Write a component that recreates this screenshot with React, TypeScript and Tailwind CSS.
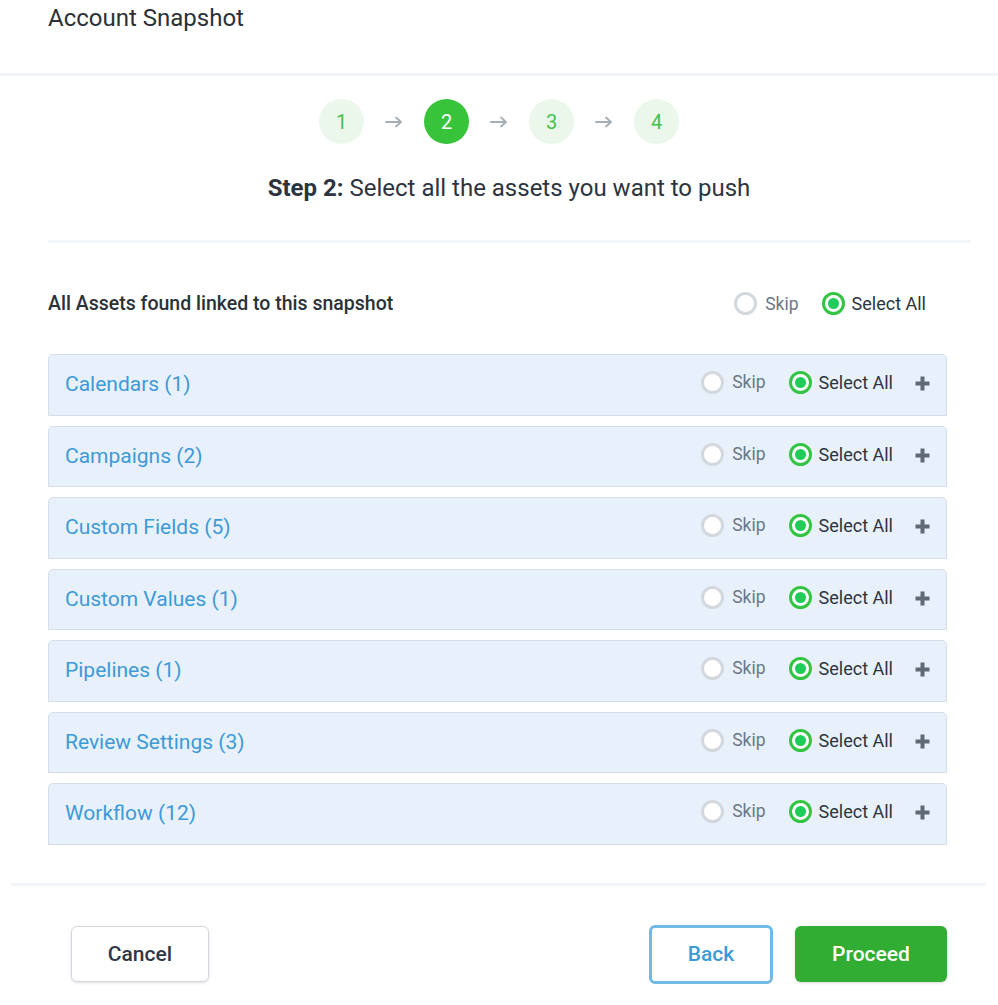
import React from "react";

const rows = [
  "Calendars (1)",
  "Campaigns (2)",
  "Custom Fields (5)",
  "Custom Values (1)",
  "Pipelines (1)",
  "Review Settings (3)",
  "Workflow (12)",
];

function Radio({ checked }: { checked?: boolean }) {
  return checked ? (
    <span className="flex h-[23px] w-[23px] items-center justify-center rounded-full border-[3px] border-[#34c443] bg-white">
      <span className="h-[11px] w-[11px] rounded-full bg-[#1fcc5a]" />
    </span>
  ) : (
    <span className="h-[23px] w-[23px] rounded-full border-[3px] border-[#d3d8de] bg-white" />
  );
}

function Choice() {
  return (
    <div className="flex items-center">
      <div className="flex items-center gap-[8px]">
        <Radio />
        <span className="text-[17.5px] text-[#6b7884]">Skip</span>
      </div>
      <div className="ml-[23px] flex items-center gap-[7px]">
        <Radio checked />
        <span className="text-[18px] text-[#2d3440]">Select All</span>
      </div>
    </div>
  );
}

function Arrow() {
  return (
    <svg width="18" height="12" viewBox="0 0 18 12" className="mx-[21px]">
      <path d="M1 6h15M11 1.5 16 6l-5 4.5" fill="none" stroke="#a5adb5" strokeWidth="1.8" strokeLinecap="round" strokeLinejoin="round" />
    </svg>
  );
}

function Step({ n, active }: { n: number; active?: boolean }) {
  return (
    <div
      className={
        active
          ? "flex h-[45px] w-[45px] items-center justify-center rounded-full bg-[#37c43b] text-[20px] text-white"
          : "flex h-[45px] w-[45px] items-center justify-center rounded-full bg-[#ebf7ea] text-[20px] text-[#46c04a]"
      }
    >
      {n}
    </div>
  );
}

export default function App() {
  return (
    <div className="min-h-[1005px] w-[998px] bg-white font-['Roboto',sans-serif] text-[#2d3440]">
      <div className="h-[73px] px-[48px] pt-[3px]">
        <h1 className="text-[24px] leading-[30px] text-[#2b3138]">Account Snapshot</h1>
      </div>
      <div className="h-[3px] w-full bg-[#f1f5f9]" />
      <div className="flex items-center justify-center pt-[23px]">
        <Step n={1} />
        <Arrow />
        <Step n={2} active />
        <Arrow />
        <Step n={3} />
        <Arrow />
        <Step n={4} />
      </div>
      <p className="mt-[30px] pl-[20px] text-center text-[24px] leading-[28px] text-[#2d3440]">
        <span className="font-bold">Step 2:</span> Select all the assets you want to push
      </p>
      <div className="mx-[48px] mr-[27px] mt-[38px] h-[3px] bg-[#f1f6fa]" />
      <div className="mt-[46px] flex items-center justify-between pl-[48px] pr-[72px]">
        <span className="text-[19.5px] font-medium text-[#2b3138]">All Assets found linked to this snapshot</span>
        <Choice />
      </div>
      <div className="mx-[48px] mr-[51px] mt-[36px] flex flex-col gap-[10px]">
        {rows.map((r) => (
          <div
            key={r}
            className="flex h-[61.5px] items-center justify-between rounded-t-[5px] border border-[#d5dde6] bg-[#e8f1fb] pl-[16px] pr-[15px]"
          >
            <span className="text-[21px] text-[#3d9ad9]">{r}</span>
            <div className="mb-[5px] flex items-center">
              <Choice />
              <svg width="17" height="17" viewBox="0 0 17 17" className="ml-[21px] mt-[2px]">
                <path d="M8.5 1.5v14M1.5 8.5h14" stroke="#5f6a74" strokeWidth="4" />
              </svg>
            </div>
          </div>
        ))}
      </div>
      <div className="mx-[11px] mr-[12px] mt-[38px] h-[3px] bg-[#f1f5f9]" />
      <div className="mt-[39px] flex items-center justify-between pl-[71px] pr-[51px]">
        <button className="h-[56px] w-[138px] rounded-[6px] border border-[#d2d6de] bg-white text-[21px] font-medium text-[#2d3748] shadow-[0_1px_3px_rgba(0,0,0,0.12)]">
          Cancel
        </button>
        <div className="flex items-center gap-[22px]">
          <button className="h-[59px] w-[124px] rounded-[6px] border-[3px] border-[#72b9e6] bg-white text-[21px] font-medium text-[#3d9ad9]">
            Back
          </button>
          <button className="h-[56px] w-[152px] rounded-[6px] bg-[#30ad32] text-[21px] font-medium text-white shadow-[0_1px_3px_rgba(0,0,0,0.15)]">
            Proceed
          </button>
        </div>
      </div>
    </div>
  );
}
